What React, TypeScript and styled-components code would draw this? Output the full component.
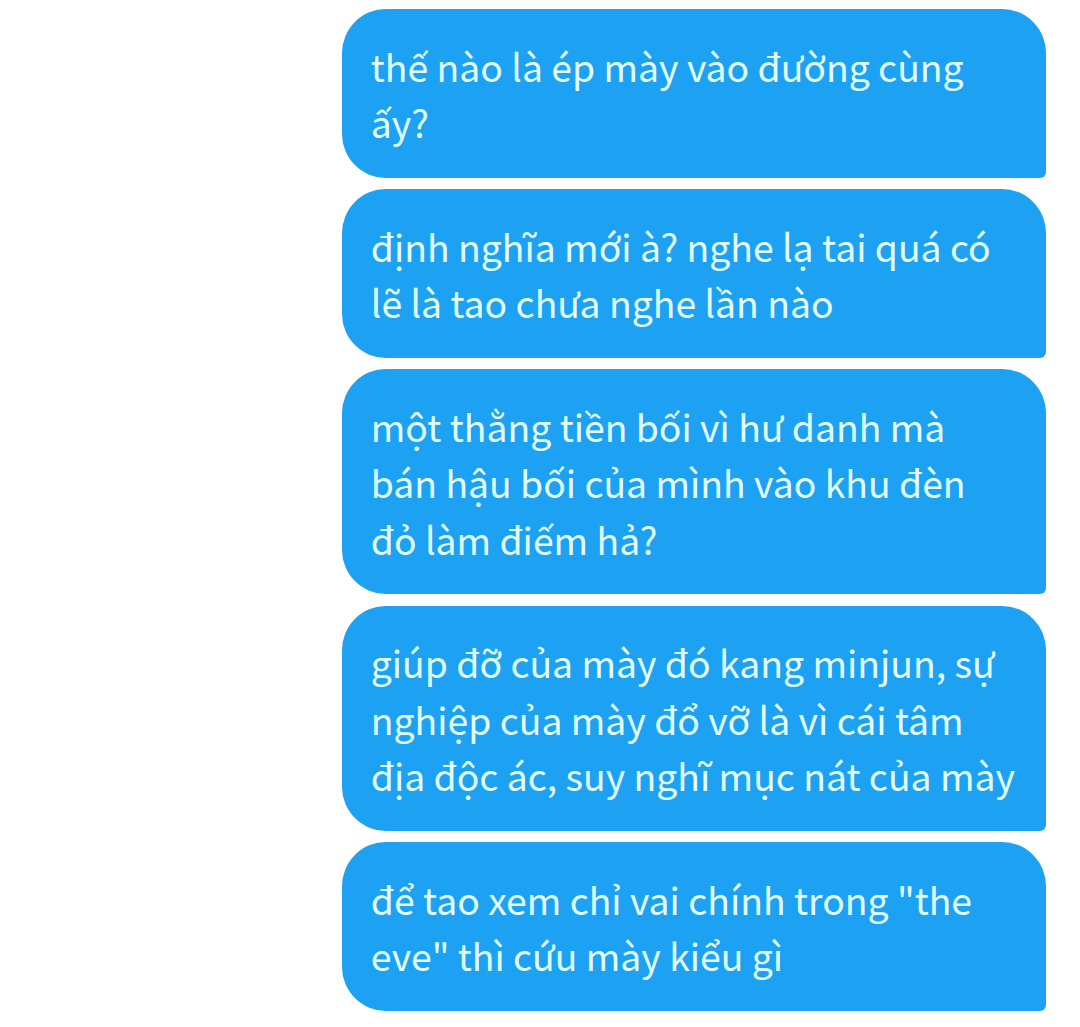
import React from 'react';
import styled, { createGlobalStyle } from 'styled-components';

const GlobalStyle = createGlobalStyle`
  body {
    margin: 0;
    background: #ffffff;
  }
`;

const Chat = styled.main`
  display: flex;
  flex-direction: column;
  align-items: flex-end;
  gap: 11.3px;
  box-sizing: border-box;
  min-height: 1027px;
  padding: 9px 33.6px 0 0;
`;

const Bubble = styled.div`
  box-sizing: border-box;
  width: 704px;
  padding: 28.8px 28.4px 27.2px;
  border-radius: 44px 44px 6px 44px;
  background: #1da1f2;
`;

const Line = styled.span`
  display: block;
  color: #e2ffff;
  font-family: 'Noto Sans CJK SC', 'Noto Sans', sans-serif;
  font-size: 37.35px;
  line-height: 56.4px;
  white-space: nowrap;
`;

const messages = [
  ['thế nào là ép mày vào đường cùng', 'ấy?'],
  ['định nghĩa mới à? nghe lạ tai quá có', 'lẽ là tao chưa nghe lần nào'],
  ['một thằng tiền bối vì hư danh mà', 'bán hậu bối của mình vào khu đèn', 'đỏ làm điếm hả?'],
  ['giúp đỡ của mày đó kang minjun, sự', 'nghiệp của mày đổ vỡ là vì cái tâm', 'địa độc ác, suy nghĩ mục nát của mày'],
  ['để tao xem chỉ vai chính trong "the', 'eve" thì cứu mày kiểu gì'],
];

const App = () => {
  return (
    <>
      <GlobalStyle />
      <Chat>
        {messages.map((lines) => (
          <Bubble key={lines[0]}>
            {lines.map((line) => (
              <Line key={line}>{line}</Line>
            ))}
          </Bubble>
        ))}
      </Chat>
    </>
  );
};

export default App;
